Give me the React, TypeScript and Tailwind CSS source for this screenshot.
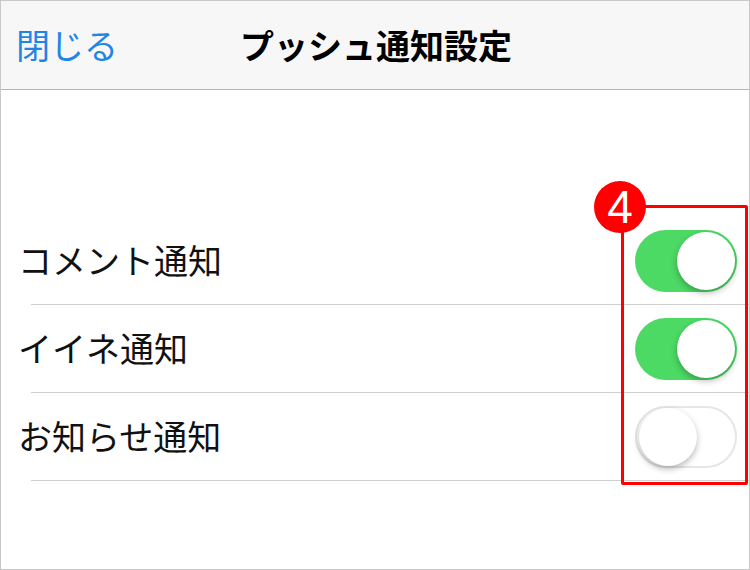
import React from 'react';

const jp = { fontFamily: '"Noto Sans CJK JP", "Noto Sans", sans-serif' };

const rows = [
  { label: 'コメント通知', on: true },
  { label: 'イイネ通知', on: true },
  { label: 'お知らせ通知', on: false },
];

function Toggle({ on }: { on: boolean }) {
  return (
    <div
      className={`flex h-[62px] w-[102px] items-center rounded-full p-[2px] ${
        on ? 'justify-end bg-[#4cd964]' : 'justify-start border-2 border-[#e6e6e6] bg-white p-0'
      }`}
    >
      <div className="h-[58px] w-[58px] rounded-full bg-white shadow-[0_3px_6px_rgba(0,0,0,0.28)]" />
    </div>
  );
}

export default function App() {
  return (
    <div className="relative h-[570px] w-[750px] overflow-hidden border border-[#c8c8c8] bg-white" style={jp}>
      <header className="relative flex h-[89px] items-center border-b border-[#b4b4b4] bg-[#f7f7f7]">
        <span className="pl-[15px] text-[34px] leading-none text-[#1f86e6]">閉じる</span>
        <h1 className="absolute inset-x-0 pl-[2px] text-center text-[34px] font-bold leading-none text-black">
          プッシュ通知設定
        </h1>
      </header>

      <div className="h-[127px]" />

      <ul>
        {rows.map((r) => (
          <li key={r.label} className="ml-[30px] flex h-[88px] items-center justify-between border-b border-[#cfcfcf] pr-[12px]">
            <span className="-ml-[13px] -mt-[2px] text-[34px] leading-none text-[#111]">{r.label}</span>
            <Toggle on={r.on} />
          </li>
        ))}
      </ul>

      {/* annotation overlay */}
      <div className="absolute left-[620px] top-[204px] h-[280px] w-[127px] rounded-[2px] border-[3px] border-[#ff0000]" />
      <div
        className="absolute left-[593px] top-[180px] flex h-[52px] w-[52px] items-center justify-center rounded-full bg-[#ff0000] text-[46px] leading-none text-white"
        style={{ fontFamily: '"Liberation Sans", Arial, sans-serif' }}
      >
        4
      </div>
    </div>
  );
}
